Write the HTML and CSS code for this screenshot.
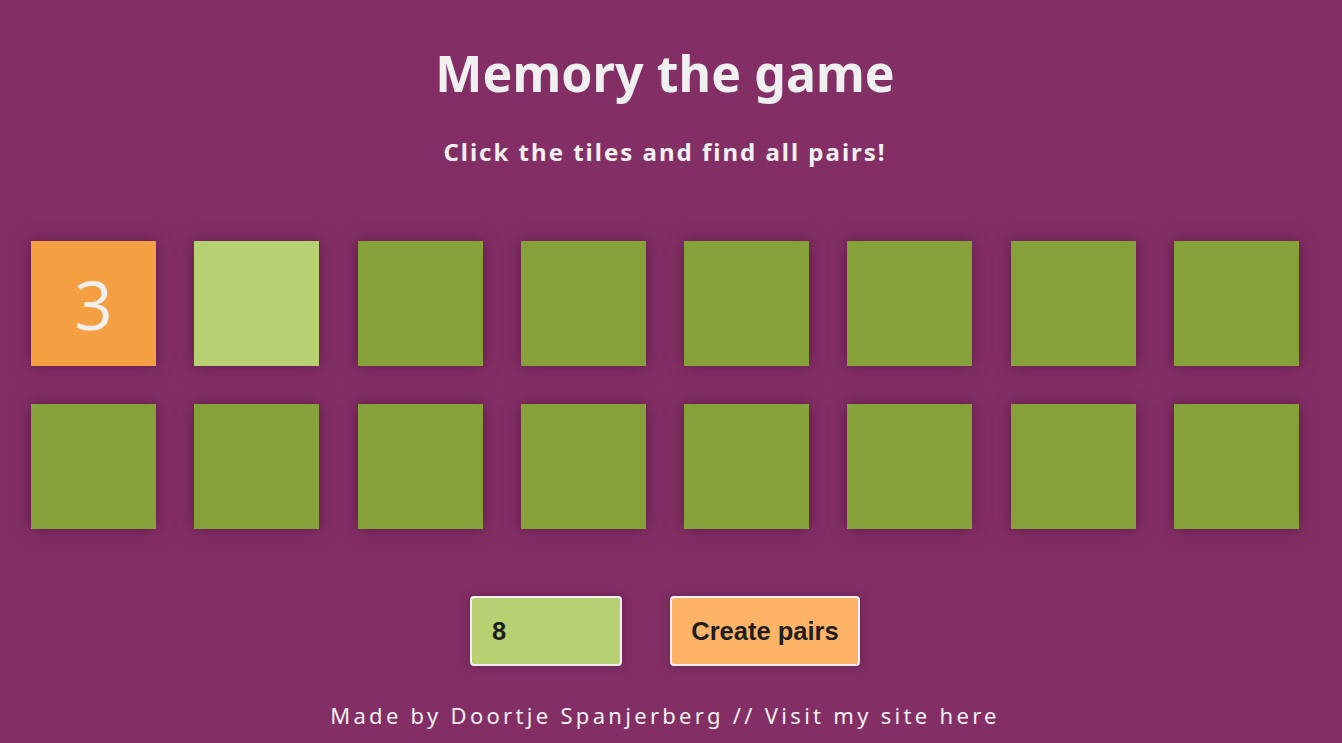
FILE: index.html
```html
<!DOCTYPE html>
<html>
<head>
<meta charset="utf-8">
<link rel="stylesheet" href="styles.css">
</head>
<body>
<div class="page">
  <h1 class="title">Memory the game</h1>
  <p class="subtitle">Click the tiles and find all pairs!</p>
  <div class="board">
    <div class="tile open">3</div>
    <div class="tile hover"></div>
    <div class="tile"></div>
    <div class="tile"></div>
    <div class="tile"></div>
    <div class="tile"></div>
    <div class="tile"></div>
    <div class="tile"></div>
    <div class="tile"></div>
    <div class="tile"></div>
    <div class="tile"></div>
    <div class="tile"></div>
    <div class="tile"></div>
    <div class="tile"></div>
    <div class="tile"></div>
    <div class="tile"></div>
  </div>
  <div class="controls">
    <input class="count" type="text" value="8">
    <button class="create">Create pairs</button>
  </div>
  <p class="footer">Made by Doortje Spanjerberg // Visit my site here</p>
</div>
</body>
</html>
```

FILE: styles.css
```css
html, body {
  margin: 0;
  padding: 0;
  background: #832f66;
  height: 100%;
  overflow: hidden;
}
.page {
  box-sizing: border-box;
  padding-right: 12px;
  font-family: "Noto Sans", "Open Sans", sans-serif;
  color: #f0f0f0;
  display: flex;
  flex-direction: column;
  align-items: center;
}
.title {
  margin: 36px 0 0;
  font-size: 50px;
  font-weight: 700;
  letter-spacing: 0.1px;
  line-height: 74px;
}
.subtitle {
  margin: 26px 0 0;
  font-size: 24px;
  font-weight: 700;
  letter-spacing: 2px;
  line-height: 32px;
}
.board {
  align-self: stretch;
  display: grid;
  grid-template-columns: repeat(8, 125px);
  column-gap: 38.3px;
  row-gap: 38px;
  padding-left: 31px;
  margin-top: 73px;
}
.tile {
  width: 125px;
  height: 125px;
  background: #86a03a;
  box-shadow: 0 0 14px rgba(60, 10, 40, 0.55);
  display: flex;
  align-items: center;
  justify-content: center;
  font-family: "Open Sans", sans-serif;
  font-size: 67px;
  font-weight: 400;
  color: #f0f0f0;
}
.tile.open { background: #f4a042; }
.tile.hover { background: #b6d072; cursor: pointer; }
.controls {
  display: flex;
  gap: 48px;
  margin-top: 67px;
}
.count {
  box-sizing: border-box;
  width: 152px;
  height: 70px;
  border: 2px solid #f3eef2;
  border-radius: 4px;
  background: #b6d072;
  font-family: "Liberation Sans", Arial, sans-serif;
  font-weight: 700;
  font-size: 25.5px;
  color: #1e1e1e;
  padding: 0 0 0 20px;
  box-shadow: 0 0 10px rgba(60, 10, 40, 0.4);
}
.create {
  box-sizing: border-box;
  width: 190px;
  height: 70px;
  border: 2px solid #f3eef2;
  border-radius: 4px;
  background: #ffb366;
  font-family: "Liberation Sans", Arial, sans-serif;
  font-weight: 700;
  font-size: 25.5px;
  color: #1e1e1e;
  padding: 0;
  box-shadow: 0 0 10px rgba(60, 10, 40, 0.4);
}
.footer {
  margin: 34px 0 0;
  font-size: 22px;
  letter-spacing: 3.3px;
  line-height: 30px;
}
```
